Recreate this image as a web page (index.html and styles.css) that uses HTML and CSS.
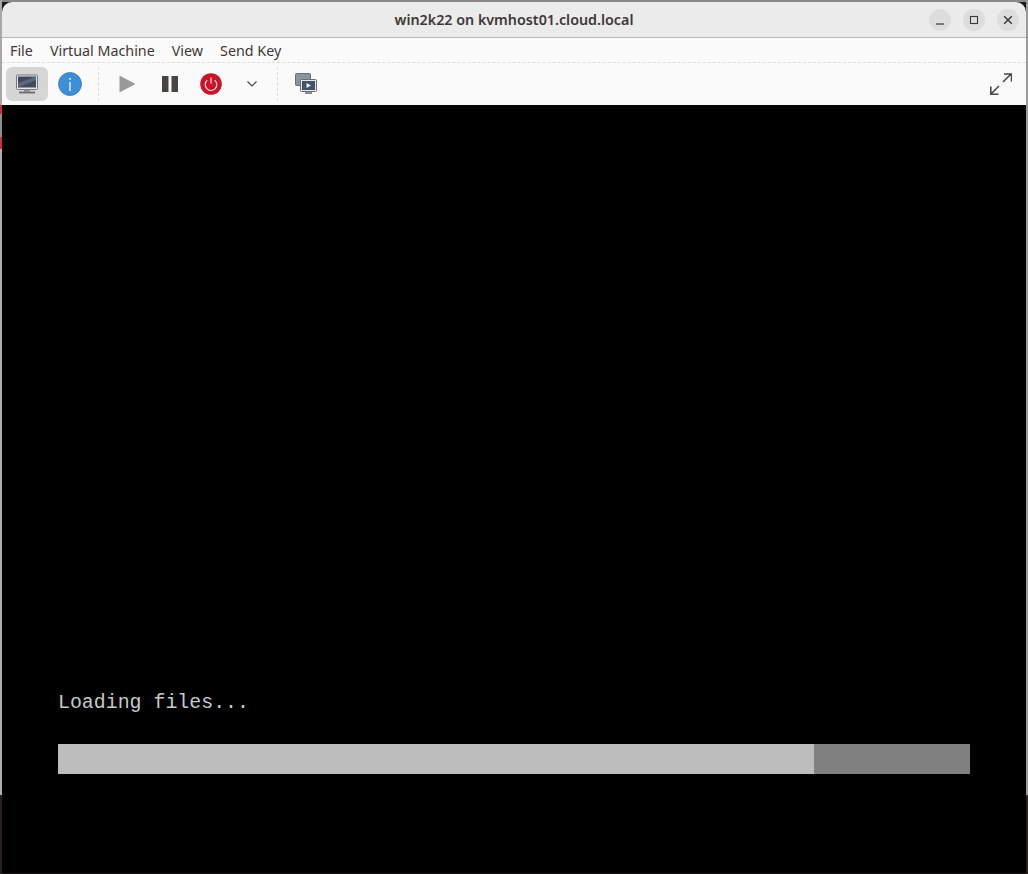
FILE: index.html
```html
<!DOCTYPE html>
<html lang="en">
<head>
    <meta charset="UTF-8">
    <meta name="viewport" content="width=device-width, initial-scale=1.0">
    <title>win2k22 on kvmhost01.cloud.local</title>
    <link rel="stylesheet" href="styles.css">
</head>
<body>
    <div class="window">
        <header class="titlebar">
            <span class="title">win2k22 on kvmhost01.cloud.local</span>
            <div class="win-controls">
                <button class="win-btn" aria-label="Minimize">
                    <svg width="16" height="16" viewBox="0 0 16 16"><path d="M4 12h8" stroke="#3d3836" stroke-width="1.2"/></svg>
                </button>
                <button class="win-btn" aria-label="Maximize">
                    <svg width="16" height="16" viewBox="0 0 16 16"><rect x="4.500" y="4.500" width="7" height="7" fill="none" stroke="#3d3836" stroke-width="1.100"/></svg>
                </button>
                <button class="win-btn" aria-label="Close">
                    <svg width="16" height="16" viewBox="0 0 16 16"><path d="M4.200 4.200l7.600 7.600M11.800 4.200l-7.600 7.600" stroke="#3d3836" stroke-width="1.500"/></svg>
                </button>
            </div>
        </header>

        <nav class="menubar">
            <span>File</span>
            <span>Virtual Machine</span>
            <span>View</span>
            <span>Send Key</span>
        </nav>

        <div class="toolbar">
            <button class="tool tool-active" aria-label="Console">
                <svg width="24" height="24" viewBox="0 0 24 24">
                    <rect x="1.500" y="3" width="21" height="14.500" rx="1" fill="#e4e4e4" stroke="#77787a"/>
                    <rect x="3" y="4.500" width="18" height="11" fill="#3f4a60"/>
                    <path d="M3 15.500V11L21 4.500V8z" fill="#5b6880"/>
                    <rect x="9" y="17.500" width="6" height="2" fill="#8a8a8a"/>
                    <rect x="4" y="19.500" width="16" height="2" rx="0.500" fill="#6f6f6f"/>
                </svg>
            </button>
            <button class="tool tool-info" aria-label="Details">
                <svg width="24" height="24" viewBox="0 0 24 24">
                    <circle cx="12" cy="12" r="11.500" fill="#3f8fd8" stroke="#3a78b5" stroke-width="0.800"/>
                    <rect x="11.300" y="10" width="1.400" height="9" fill="#e8f2fb"/>
                    <rect x="11.200" y="6" width="1.600" height="1.800" fill="#e8f2fb"/>
                </svg>
            </button>
            <span class="sep sep-a"></span>
            <button class="tool tool-play" aria-label="Run">
                <svg width="17" height="18" viewBox="0 0 17 18"><path d="M0.500 0.500L16.500 9 0.500 17.500z" fill="#999a98"/></svg>
            </button>
            <button class="tool tool-pause" aria-label="Pause">
                <svg width="16" height="16" viewBox="0 0 16 16"><path d="M0 0h6.500v16H0zM9.500 0H16v16H9.500z" fill="#4a4441"/></svg>
            </button>
            <button class="tool tool-power" aria-label="Shut down">
                <svg width="22" height="22" viewBox="0 0 22 22">
                    <circle cx="11" cy="11" r="10.800" fill="#c7162b"/>
                    <path d="M7.300 7.200a5.800 5.800 0 1 0 7.400 0" fill="none" stroke="#f6dcdc" stroke-width="1.100"/>
                    <path d="M11 4.500v6" stroke="#f6dcdc" stroke-width="1.200"/>
                </svg>
            </button>
            <button class="tool tool-caret" aria-label="Shut down options">
                <svg width="12" height="8" viewBox="0 0 12 8"><path d="M1.500 1.500L6 6l4.500-4.500" fill="none" stroke="#4a4745" stroke-width="1.200"/></svg>
            </button>
            <span class="sep sep-b"></span>
            <button class="tool tool-snap" aria-label="Manage snapshots">
                <svg width="22" height="22" viewBox="0 0 22 22">
                    <rect x="0.500" y="0.500" width="15" height="12" rx="1" fill="#8f949c" stroke="#6b6e72"/>
                    <rect x="5.500" y="6.500" width="16" height="12" rx="1" fill="#e6e6e6" stroke="#6b6e72"/>
                    <rect x="7" y="8" width="13" height="9" fill="#45526b"/>
                    <path d="M11.500 10l4.500 2.500-4.500 2.500z" fill="#eef0f3"/>
                    <rect x="10" y="19" width="7" height="2" fill="#8a8a8a"/>
                </svg>
            </button>
            <button class="tool tool-full" aria-label="Fullscreen">
                <svg width="22" height="22" viewBox="0 0 22 22">
                    <path d="M13 9l8-8M14 1h7.500v7.500M9 13l-8 8M0.800 13.500v7.700h7.700" fill="none" stroke="#4a4745" stroke-width="1.600"/>
                </svg>
            </button>
        </div>

        <main class="console">
            <p class="console-text">Loading files...</p>
            <div class="progress">
                <div class="progress-fill"></div>
            </div>
        </main>
    </div>
</body>
</html>
```

FILE: styles.css
```css
* {
    box-sizing: border-box;
}
html, body {
    height: 100%;
}
body {
    margin: 0;
    padding: 2px 2px 0;
    /* desktop showing around the window edge */
    background:
        linear-gradient(#a8a8a8 105px, #c7303c 105px, #c7303c 114px, #8e8e8e 114px, #8e8e8e 137px, #c7303c 137px, #c7303c 149px, #b0b0b0 149px, #b0b0b0 795px, #2a211d 795px) left top / 2px 100% no-repeat,
        linear-gradient(#9a9a9a 795px, #2a211d 795px) right top / 2px 100% no-repeat,
        linear-gradient(#8a8a8a, #8a8a8a) left top / 100% 2px no-repeat,
        #1d1816;
    font-family: "Noto Sans", sans-serif;
    overflow: hidden;
}
.window {
    height: 871px;
    display: flex;
    flex-direction: column;
    background-color: #000;
    border-radius: 10px 10px 0 0;
}
.titlebar {
    height: 36px;
    flex: none;
    display: flex;
    align-items: center;
    justify-content: center;
    position: relative;
    background-color: #ebebeb;
    border-bottom: 1px solid #b6b6b6;
    border-radius: 10px 10px 0 0;
}
.title {
    font-size: 14.300px;
    font-weight: 600;
    color: #3d3836;
}
.win-controls {
    position: absolute;
    right: 7px;
    top: 7px;
    display: flex;
    gap: 12px;
}
.win-btn {
    width: 22px;
    height: 22px;
    padding: 0;
    border: none;
    border-radius: 50%;
    background-color: #dcdddc;
    display: flex;
    align-items: center;
    justify-content: center;
}
.menubar {
    height: 25px;
    flex: none;
    display: flex;
    align-items: center;
    gap: 17px;
    padding-left: 8px;
    background-color: #fafafa;
    border-bottom: 1px dashed #dcdcdc;
    font-size: 14.300px;
    color: #3d3836;
}
.toolbar {
    height: 42px;
    flex: none;
    display: flex;
    align-items: center;
    padding-left: 4px;
    background-color: #fafafa;
}
.tool {
    height: 34px;
    width: 42px;
    padding: 0;
    border: none;
    background: none;
    display: flex;
    align-items: center;
    justify-content: center;
}
.tool-active {
    background-color: #d6d6d6;
    border-radius: 6px;
}
.tool-info {
    margin-left: 1px;
}
.sep {
    width: 0;
    height: 34px;
    border-left: 1px dashed #dcdcdc;
}
.sep-a {
    margin-left: 7px;
}
.tool-play {
    margin-left: 7px;
}
.tool-pause {
    width: 44px;
}
.tool-power {
    width: 38px;
}
.tool-caret {
    width: 44px;
}
.sep-b {
    margin-left: 3px;
}
.tool-snap {
    margin-left: 7px;
}
.tool-full {
    margin-left: auto;
    margin-right: 7px;
    width: 36px;
}
.console {
    flex: 1;
    padding: 586px 56px 0;
    background-color: #000;
}
.console-text {
    margin: 0 0 30px;
    height: 23px;
    font-family: "Liberation Mono", monospace;
    font-size: 19.900px;
    line-height: 23px;
    color: #c8c8c8;
}
.progress {
    height: 30px;
    background-color: #808080;
}
.progress-fill {
    width: 756px;
    height: 100%;
    background-color: #bdbdbd;
}
```
